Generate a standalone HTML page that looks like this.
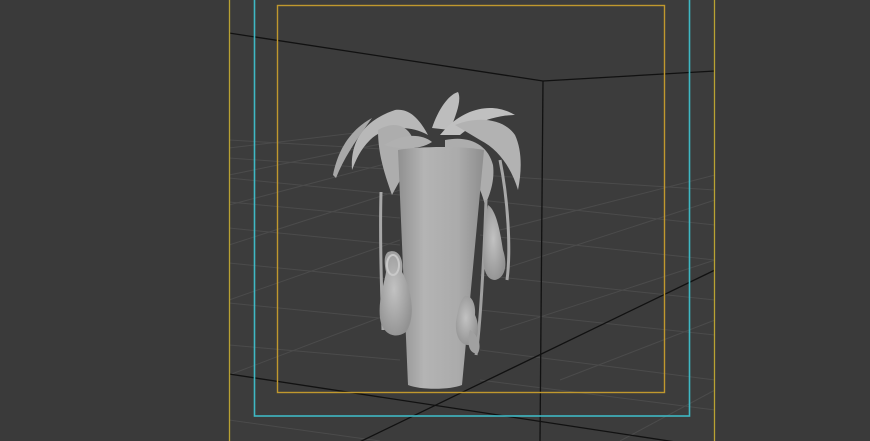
<!DOCTYPE html>
<html><head><meta charset="utf-8"><style>
html,body{margin:0;padding:0;background:#3b3b3b;width:870px;height:441px;overflow:hidden}
svg{display:block}
</style></head><body>
<svg width="870" height="441" viewBox="0 0 870 441" xmlns="http://www.w3.org/2000/svg">
<defs>
<linearGradient id="vase" x1="0" x2="1" y1="0" y2="0">
<stop offset="0" stop-color="#909090"/><stop offset="0.3" stop-color="#b4b4b4"/><stop offset="0.7" stop-color="#ababab"/><stop offset="1" stop-color="#8e8e8e"/>
</linearGradient>
<radialGradient id="pit" cx="0.45" cy="0.45" r="0.6">
<stop offset="0" stop-color="#c2c2c2"/><stop offset="1" stop-color="#929292"/>
</radialGradient>
</defs>
<rect width="870" height="441" fill="#3a3a3a"/>
<rect x="229" y="0" width="486" height="441" fill="#3c3c3c"/>
<g stroke="#5a5a5a" stroke-width="1" fill="none" opacity="0.5">
<line x1="229" y1="140" x2="400" y2="150"/>
<line x1="229" y1="158" x2="400" y2="170"/>
<line x1="229" y1="178" x2="400" y2="195"/>
<line x1="229" y1="202" x2="400" y2="218"/>
<line x1="229" y1="228" x2="400" y2="245"/>
<line x1="229" y1="263" x2="400" y2="280"/>
<line x1="229" y1="303" x2="400" y2="320"/>
<line x1="229" y1="345" x2="400" y2="360"/>
<line x1="229" y1="148" x2="380" y2="130"/>
<line x1="229" y1="175" x2="400" y2="140"/>
<line x1="229" y1="205" x2="400" y2="160"/>
<line x1="229" y1="245" x2="400" y2="190"/>
<line x1="229" y1="300" x2="400" y2="240"/>
<line x1="229" y1="375" x2="400" y2="310"/>
<line x1="480" y1="175" x2="715" y2="190"/>
<line x1="480" y1="200" x2="715" y2="225"/>
<line x1="480" y1="235" x2="715" y2="260"/>
<line x1="480" y1="275" x2="715" y2="300"/>
<line x1="480" y1="310" x2="715" y2="335"/>
<line x1="480" y1="350" x2="715" y2="380"/>
<line x1="480" y1="380" x2="715" y2="410"/>
<line x1="500" y1="230" x2="715" y2="175"/>
<line x1="500" y1="270" x2="715" y2="200"/>
<line x1="500" y1="330" x2="715" y2="260"/>
<line x1="560" y1="380" x2="715" y2="320"/>
<line x1="620" y1="441" x2="715" y2="390"/>
<line x1="229" y1="420" x2="380" y2="441"/>
</g>
<g stroke="#111" stroke-width="1.3" fill="none">
<polyline points="229,33 543,81 715,71"/>
<line x1="543" y1="81" x2="540" y2="441"/>
<line x1="229" y1="374" x2="715" y2="448"/>
<line x1="715" y1="270" x2="316" y2="463"/>
</g>
<rect x="229.5" y="-5" width="485" height="460" fill="none" stroke="#b9a233" stroke-width="1.3"/>
<rect x="254.5" y="-5" width="435" height="421" fill="none" stroke="#3fb8c4" stroke-width="1.6"/>
<rect x="277.5" y="5.5" width="387" height="387" fill="none" stroke="#c0982e" stroke-width="1.4"/>
<g fill="#b5b5b5">
<path d="M352,170 C350,140 365,120 395,110 C410,108 420,120 428,135 C410,125 385,125 370,140 C360,150 356,160 352,170Z" fill="#b8b8b8"/>
<path d="M333,175 C338,150 350,130 372,118 C360,135 345,155 336,178Z" fill="#a8a8a8"/>
<path d="M432,128 C438,110 448,95 458,92 C462,100 456,115 450,130Z" fill="#bdbdbd"/>
<path d="M440,135 C460,110 490,100 515,115 C505,115 480,118 460,135Z" fill="#c0c0c0"/>
<path d="M455,125 C480,115 505,120 515,135 C522,150 522,170 518,190 C512,170 500,150 480,140Z" fill="#b2b2b2"/>
<path d="M378,130 C395,120 410,125 415,145 C410,165 400,180 392,195 C385,175 378,155 378,130Z" fill="#adadad"/>
<path d="M445,140 C470,135 488,145 493,165 C495,180 490,195 485,205 C480,185 470,165 445,150Z" fill="#adadad"/>
<path d="M384,145 C400,135 420,132 432,142 C420,150 400,150 384,145Z" fill="#b0b0b0"/>
<path d="M381,192 C380,230 381,280 383,330" stroke="#a8a8a8" stroke-width="3" fill="none"/>
<path d="M500,160 C508,200 511,250 507,280" stroke="#a8a8a8" stroke-width="3" fill="none"/>
<path d="M486,200 C484,260 480,330 476,355" stroke="#a0a0a0" stroke-width="3" fill="none"/>
<path d="M398,150 C420,146 465,146 484,150 L462,385 C450,390 420,390 408,385 Z" fill="url(#vase)"/>
<path d="M388,252 C398,248 404,258 402,272 C412,290 416,318 406,332 C395,340 382,334 380,318 C378,300 384,285 386,272 C384,262 384,255 388,252Z" fill="url(#pit)"/>
<ellipse cx="393" cy="265" rx="6" ry="10" fill="none" stroke="#c8c8c8" stroke-width="2"/>
<path d="M488,205 C496,210 500,230 503,250 C508,265 505,278 495,280 C485,280 482,265 484,250 C486,235 485,215 488,205Z" fill="url(#pit)"/>
<path d="M465,296 C472,295 476,305 475,315 C480,325 479,342 470,345 C460,346 455,335 456,322 C458,310 460,300 465,296Z" fill="url(#pit)"/>
<path d="M470,330 C478,335 482,345 478,353 C470,355 466,345 470,330Z" fill="#a0a0a0"/>
</g>
</svg>
</body></html>
